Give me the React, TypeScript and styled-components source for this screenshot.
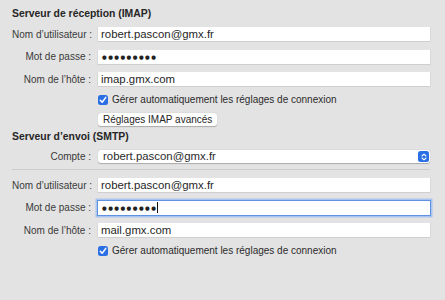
import styled, { createGlobalStyle } from "styled-components";

const GlobalStyle = createGlobalStyle`
	html, body {
		margin: 0;
		padding: 0;
		background: #e3e3e3;
	}
	body {
		font-family: "Liberation Sans", "Noto Sans", sans-serif;
		-webkit-font-smoothing: antialiased;
	}
`;

type FieldProps = {
	label: string;
	value: string;
	secret?: boolean;
	focused?: boolean;
};

function Field({ label, value, secret, focused }: FieldProps) {
	return (
		<Row>
			<Label>{label}</Label>
			<Input $focused={focused}>
				{secret ? <Dots>{value}</Dots> : value}
				{focused && <Caret />}
			</Input>
		</Row>
	);
}

function CheckRow() {
	return (
		<Row>
			<Label />
			<CheckLine>
				<Checkbox>
					<svg width="8" height="8" viewBox="0 0 8 8">
						<path d="M1.3 4.2 L3.2 6.2 L6.8 1.4" fill="none" stroke="white" strokeWidth="1.5" strokeLinecap="round" strokeLinejoin="round" />
					</svg>
				</Checkbox>
				Gérer automatiquement les réglages de connexion
			</CheckLine>
		</Row>
	);
}

export default function App() {
	return (
		<Page>
			<GlobalStyle />
			<Heading>Serveur de réception (IMAP)</Heading>
			<Form>
				<Field label="Nom d’utilisateur :" value="robert.pascon@gmx.fr" />
				<Field label="Mot de passe :" value="●●●●●●●●●" secret />
				<Field label="Nom de l’hôte :" value="imap.gmx.com" />
				<CheckRow />
				<Row>
					<Label />
					<PushButton type="button">Réglages IMAP avancés</PushButton>
				</Row>
			</Form>

			<Heading $top={5}>Serveur d’envoi (SMTP)</Heading>
			<Form>
				<Row>
					<Label>Compte :</Label>
					<Select>
						robert.pascon@gmx.fr
						<Stepper>
							<svg width="6" height="8" viewBox="0 0 6 8">
								<path d="M1 3 L3 1.2 L5 3 M1 5 L3 6.8 L5 5" fill="none" stroke="white" strokeWidth="1.1" strokeLinecap="round" strokeLinejoin="round" />
							</svg>
						</Stepper>
					</Select>
				</Row>
			</Form>
			<Separator />
			<Form $top={8}>
				<Field label="Nom d’utilisateur :" value="robert.pascon@gmx.fr" />
				<Field label="Mot de passe :" value="●●●●●●●●●" secret focused />
				<Field label="Nom de l’hôte :" value="mail.gmx.com" />
				<CheckRow />
			</Form>
		</Page>
	);
}

const Page = styled.div`
	width: 445px;
	height: 300px;
	box-sizing: border-box;
	padding: 8px 15px 0 12px;
	color: #2b2b2b;
	font-size: 10px;
`;

const Heading = styled.div<{ $top?: number }>`
	margin-top: ${(p) => p.$top ?? 0}px;
	height: 12px;
	line-height: 12px;
	font-size: 10.4px;
	font-weight: 700;
	color: #262626;
`;

const Form = styled.div<{ $top?: number }>`
	display: flex;
	flex-direction: column;
	gap: 8.5px;
	margin-top: ${(p) => p.$top ?? 7}px;
`;

const Row = styled.div`
	display: flex;
	align-items: center;
	gap: 7px;
`;

const Label = styled.div`
	width: 79px;
	flex-shrink: 0;
	text-align: right;
	color: #3a3a3a;
	white-space: nowrap;
`;

const Input = styled.div<{ $focused?: boolean }>`
	flex: 1;
	height: 14px;
	line-height: 14px;
	padding-left: 3px;
	background: white;
	color: #262626;
	font-size: 11.4px;
	box-shadow: ${(p) =>
		p.$focused
			? "0 0 0 1px #5f92e0, 0 0 0 2.5px #a9c4ee"
			: "0 0.5px 0 0.5px #cfcfcf"};
	display: flex;
	align-items: center;
	white-space: nowrap;
`;

const Dots = styled.span`
	font-family: "DejaVu Sans", sans-serif;
	font-size: 5.4px;
	letter-spacing: 1.45px;
	padding-left: 1px;
	color: #222;
`;

const Caret = styled.span`
	width: 1px;
	height: 11px;
	background: #111;
	margin-left: 0;
`;

const CheckLine = styled.div`
	display: flex;
	align-items: center;
	gap: 4px;
	height: 10px;
	color: #2b2b2b;
`;

const Checkbox = styled.span`
	width: 10px;
	height: 10px;
	border-radius: 2.5px;
	background: #2a6fe3;
	display: inline-flex;
	align-items: center;
	justify-content: center;
	box-sizing: border-box;
`;

const PushButton = styled.button`
	height: 13px;
	padding: 0 5px;
	border: none;
	border-radius: 3px;
	background: white;
	box-shadow: 0 0.5px 1px rgba(0, 0, 0, 0.25);
	font: inherit;
	font-size: 10px;
	line-height: 13px;
	color: #262626;
`;

const Select = styled.div`
	flex: 1;
	height: 13px;
	line-height: 13px;
	padding-left: 5px;
	padding-right: 1px;
	background: white;
	border-radius: 3px;
	font-size: 11.4px;
	box-shadow: 0 0.5px 1px rgba(0, 0, 0, 0.25);
	display: flex;
	align-items: center;
	justify-content: space-between;
`;

const Stepper = styled.span`
	width: 11px;
	height: 11px;
	border-radius: 2.5px;
	background: #2a6fe3;
	display: inline-flex;
	align-items: center;
	justify-content: center;
`;

const Separator = styled.div`
	height: 1px;
	background: #cdcdcd;
	margin-top: 6px;
`;
